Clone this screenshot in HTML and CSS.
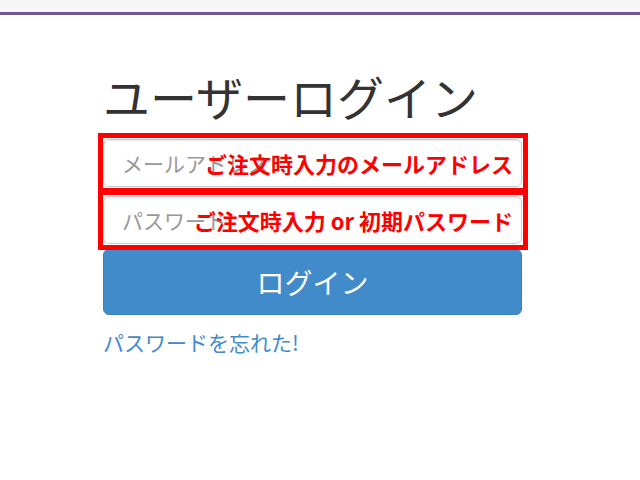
FILE: index.html
```html
<!DOCTYPE html>
<html lang="ja">
<head>
<meta charset="utf-8">
<title>ユーザーログイン</title>
<link rel="stylesheet" href="styles.css">
</head>
<body>
<div class="topbar"></div>
<main class="container">
  <h2 class="title">ユーザーログイン</h2>
  <form class="signin">
    <div class="field">
      <input class="input" type="email" placeholder="メールアドレス">
      <div class="annot annot-1"><span class="annot-text">ご注文時入力のメールアドレス</span></div>
    </div>
    <div class="field">
      <input class="input" type="password" placeholder="パスワード">
      <div class="annot annot-2"><span class="annot-text">ご注文時入力 or 初期パスワード</span></div>
    </div>
    <button class="btn" type="button">ログイン</button>
  </form>
  <a class="forgot" href="#">パスワードを忘れた!</a>
</main>
</body>
</html>
```

FILE: styles.css
```css
* { box-sizing: border-box; }
html, body {
  margin: 0;
  padding: 0;
  background: #fff;
  font-family: "Noto Sans CJK JP", "Noto Sans", sans-serif;
}
.topbar {
  height: 15px;
  background: #f7f7f7;
  border-bottom: 3px solid #6f5499;
}
.container {
  padding-left: 103px;
  width: 522px;
}
.title {
  margin: 0;
  padding-top: 49px;
  font-size: 47px;
  font-weight: 400;
  line-height: 64px;
  color: #333;
}
.signin {
  margin-top: 11px;
  display: flex;
  flex-direction: column;
}
.field {
  position: relative;
  margin-bottom: 9px;
}
.field + .field {
  margin-bottom: 5px;
}
.input {
  display: block;
  width: 419px;
  height: 48px;
  padding: 0 18px;
  border: 1px solid #ccc;
  border-radius: 6px;
  box-shadow: inset 0 1px 1px rgba(0,0,0,0.075);
  font-family: inherit;
  font-size: 21px;
  color: #555;
  background: #fff;
}
.input::placeholder { color: #999; }
.annot {
  position: absolute;
  left: -5px;
  right: -6px;
  top: -6px;
  bottom: -6px;
  border: 5px solid #ff0000;
  display: flex;
  align-items: center;
  justify-content: flex-end;
  padding-right: 10px;
}
.annot-text {
  color: #ff0000;
  font-weight: 700;
  font-size: 22px;
  line-height: 1;
}
.btn {
  display: block;
  width: 419px;
  height: 66px;
  border: 1px solid #3a7fbf;
  border-radius: 6px;
  background: #428bca;
  color: #fff;
  font-family: inherit;
  font-size: 28px;
  padding: 0;
  cursor: pointer;
}
.forgot {
  display: inline-block;
  margin-top: 12px;
  font-size: 21px;
  line-height: 30px;
  color: #428bca;
  text-decoration: none;
}
```
